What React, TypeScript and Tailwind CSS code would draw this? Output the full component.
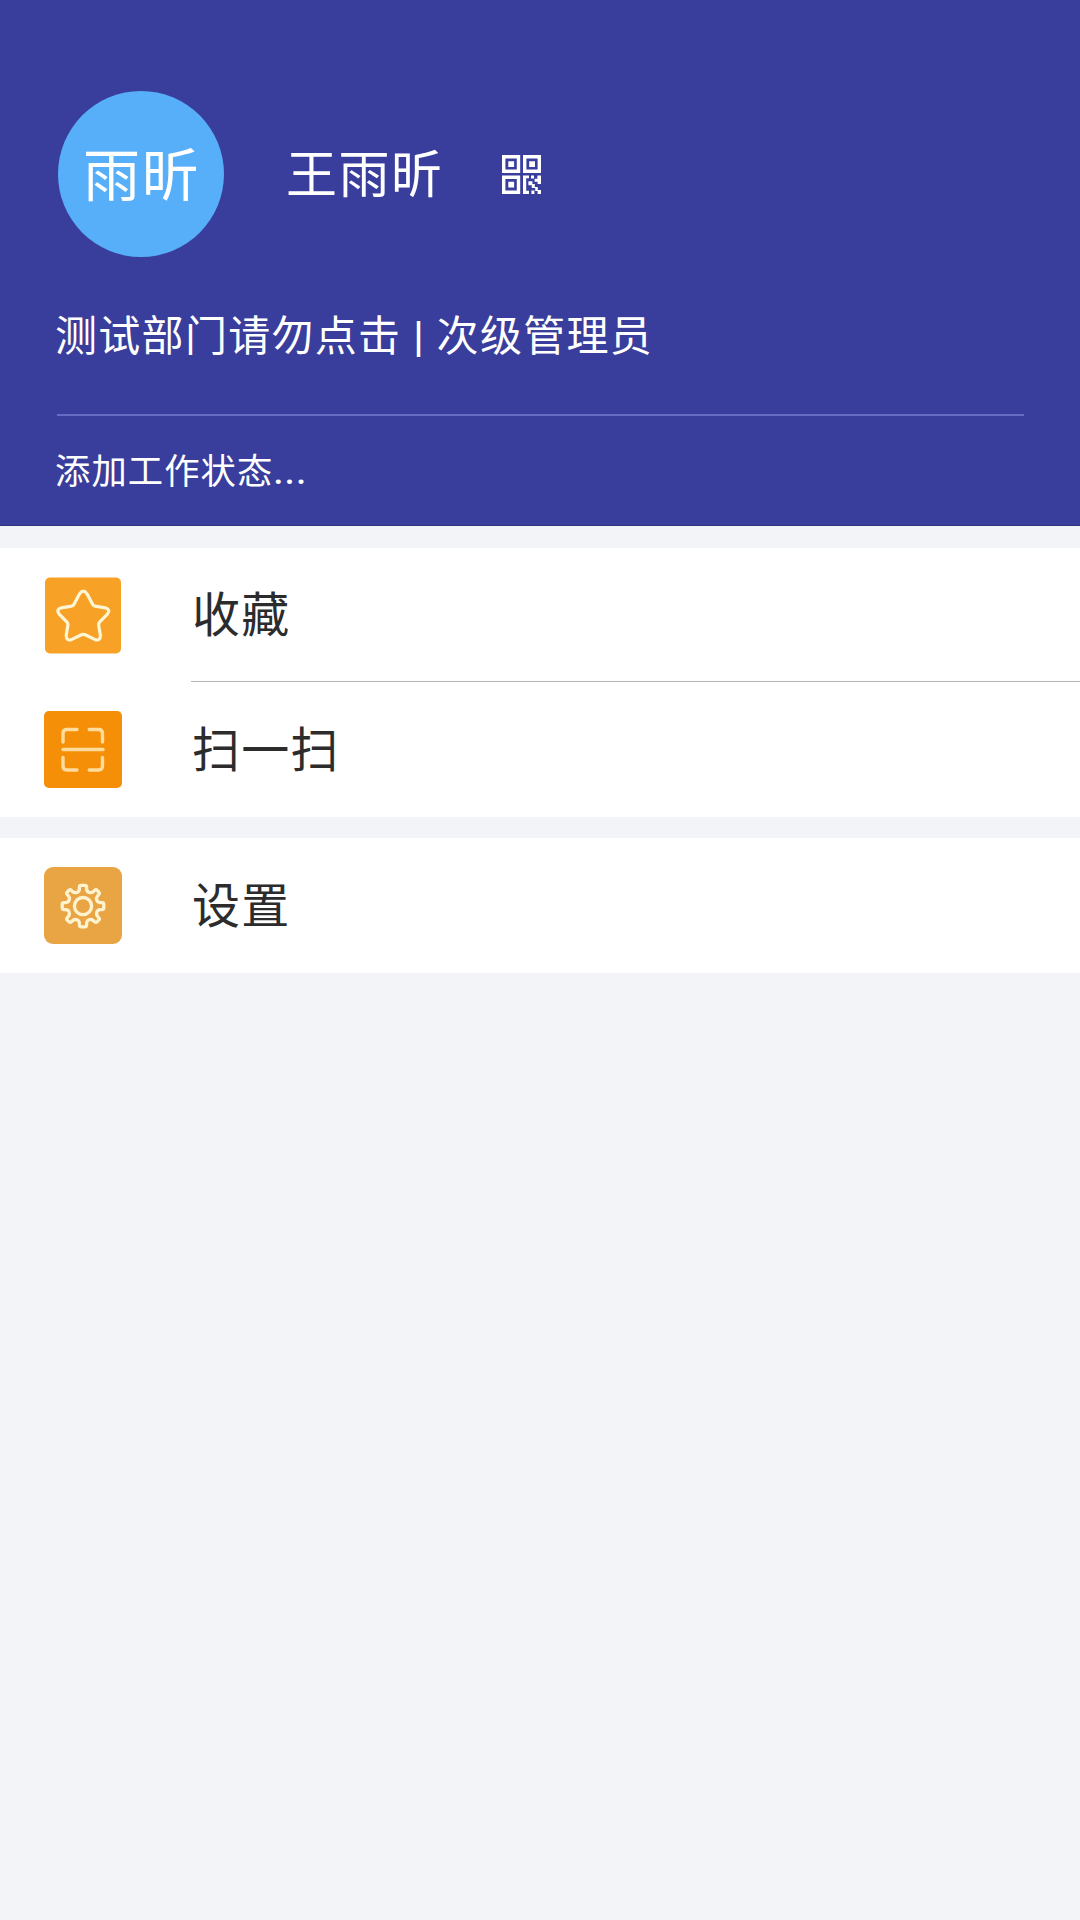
import type { ReactNode } from "react";

interface RowProps {
  icon: ReactNode;
  label: string;
  divided?: boolean;
}

function QrIcon() {
  return (
    <svg className="h-[39px] w-[39px]" viewBox="0 0 39 39" fill="none">
      <g stroke="#fff" strokeWidth="3.4">
        <path d="M1.7 1.7h14.8v14.6H1.7zM22.7 1.7h14.6v14.6H22.7zM1.7 22.2h14.8v15H1.7z" />
      </g>
      <g fill="#fff">
        <path d="M6.3 6.2h5.8v5.8H6.3zM27.2 6.2H33v5.8h-5.8zM6.3 26.8h5.8v5.8H6.3z" />
        <path d="M21 20.5h6v2.8h-2.8v12.4H27V39h-6z" />
        <path d="M26.4 26.2h4v2.8h2.4v3h3v3H39v4h-3.4v-3h-2.4v-3h-3.4v-2.8h-3.4zM29 20.5h3v3h-3zM35.4 20.5H39v8.6h-3.4v-2.3h-3v-3h2.8zM29.4 35.6h3V39h-3z" />
      </g>
    </svg>
  );
}

function StarIcon() {
  return (
    <svg className="h-[78px] w-[78px]" viewBox="0 0 78 78" fill="none">
      <rect x="1" y="1.5" width="76" height="76" rx="5" fill="#f8a127" />
      <path
        d="M35.6 17.8Q39.3 12.4 43 17.8L48.5 28.1Q49.3 29.8 51.1 30.1L61.3 31.8Q67.1 33.5 63.4 38.1L55.6 46.2Q54.4 47.4 54.7 49.2L56.4 59.5Q56.3 65.6 50.7 63.4L41.2 58.8Q39.3 57.9 37.4 58.8L27.9 63.4Q22.3 65.6 22.2 59.5L23.9 49.2Q24.2 47.4 23 46.2L15.2 38.1Q11.5 33.5 17.3 31.8L27.5 30.1Q29.3 29.8 30.1 28.1Z"
        stroke="#fff6d5"
        strokeWidth="3.2"
        strokeLinejoin="round"
      />
    </svg>
  );
}

function ScanIcon() {
  return (
    <svg className="h-[78px] w-[78px]" viewBox="0 0 78 78" fill="none">
      <rect width="78" height="77" rx="5" fill="#f58f08" />
      <path
        d="M19 31V22.5Q19 18.5 23 18.5H33M45.2 18.5H54.5Q58.5 18.5 58.5 22.5V31M19 46.5V55Q19 59 23 59H33M45.2 59H54.5Q58.5 59 58.5 55V46.5M19 38.5H59"
        stroke="#ffdc9b"
        strokeWidth="3.4"
        strokeLinecap="round"
      />
    </svg>
  );
}

function GearIcon() {
  return (
    <svg className="h-[78px] w-[78px]" viewBox="0 0 78 78" fill="none">
      <rect width="78" height="77" rx="9" fill="#e9a444" />
      <g stroke="#fff3cf" strokeWidth="3.3" strokeLinejoin="round">
        <path d="M37.2 18.4H40.8Q42.6 18.4 42.6 20.2V22Q42.8 24.6 45 25.4Q47.4 26.2 49.4 24.6L50.6 23.4Q51.9 22.2 53.2 23.5L54.7 25Q56 26.3 54.7 27.6L53.6 28.8Q52 30.8 52.8 33.2Q53.7 35.4 56.2 35.6H58Q59.8 35.6 59.8 37.4V40.8Q59.8 42.6 58 42.6H56.2Q53.7 42.8 52.8 45Q52 47.4 53.6 49.4L54.7 50.6Q56 51.9 54.7 53.2L53.2 54.7Q51.9 56 50.6 54.8L49.4 53.6Q47.4 52 45 52.8Q42.8 53.6 42.6 56.2V58Q42.6 59.8 40.8 59.8H37.2Q35.4 59.8 35.4 58V56.2Q35.2 53.6 33 52.8Q30.6 52 28.6 53.6L27.4 54.8Q26.1 56 24.8 54.7L23.3 53.2Q22 51.9 23.3 50.6L24.4 49.4Q26 47.4 25.2 45Q24.3 42.8 21.8 42.6H20Q18.2 42.6 18.2 40.8V37.4Q18.2 35.6 20 35.6H21.8Q24.3 35.4 25.2 33.2Q26 30.8 24.4 28.8L23.3 27.6Q22 26.3 23.3 25L24.8 23.5Q26.1 22.2 27.4 23.4L28.6 24.6Q30.6 26.2 33 25.4Q35.2 24.6 35.4 22V20.2Q35.4 18.4 37.2 18.4Z" />
        <circle cx="39" cy="39.1" r="8.6" />
      </g>
    </svg>
  );
}

function MenuRow({ icon, label, divided }: RowProps) {
  return (
    <button className="flex h-full w-full items-center pl-11 text-left">
      {icon}
      <span
        className={`ml-[69px] flex h-full flex-1 items-center pb-[7px] pl-px text-[48px] tracking-[1.2px] text-[#2c2c2c] ${
          divided ? "border-b border-[#b4b4b4]" : ""
        }`}
      >
        {label}
      </span>
    </button>
  );
}

export default function App() {
  return (
    <div className="flex h-[1920px] w-[1080px] flex-col bg-[#f3f4f7] font-['Noto_Sans_CJK_SC',sans-serif] leading-none">
      {/* Profile */}
      <header className="h-[526px] border-b border-[#30337f] bg-[#393d9b] px-14 pt-[91px] text-white">
        <div className="flex h-[166px] items-center pl-0.5">
          <div className="flex h-[166px] w-[166px] items-center justify-center rounded-full bg-[#57aff9] pb-1.5 pl-px text-[57px] tracking-[1.6px]">
            雨昕
          </div>
          <h1 className="ml-[62px] pb-[5px] text-[51px] tracking-[1.4px]">王雨昕</h1>
          <div className="ml-[59px]">
            <QrIcon />
          </div>
        </div>
        <p className="-ml-px mt-[59px] h-[42px] font-['Roboto','Noto_Sans_CJK_SC',sans-serif] text-[42px] leading-[42px] tracking-[1.3px]">
          测试部门请勿点击 <span className="font-medium">|</span> 次级管理员
        </p>
        <hr className="mt-[56px] ml-px border-t-2 border-[#686bc4]" />
        <p className="-ml-px mt-[39px] font-['Roboto','Noto_Sans_CJK_SC',sans-serif] text-[35.3px] tracking-[1.1px]">
          添加工作状态<span className="font-medium tracking-[1.6px]">...</span>
        </p>
      </header>

      {/* Menu */}
      <section className="mt-[22px] bg-white">
        <div className="h-[134px]">
          <MenuRow icon={<StarIcon />} label="收藏" divided />
        </div>
        <div className="h-[135px]">
          <MenuRow icon={<ScanIcon />} label="扫一扫" />
        </div>
      </section>
      <section className="mt-[21px] h-[135px] bg-white">
        <MenuRow icon={<GearIcon />} label="设置" />
      </section>
    </div>
  );
}
